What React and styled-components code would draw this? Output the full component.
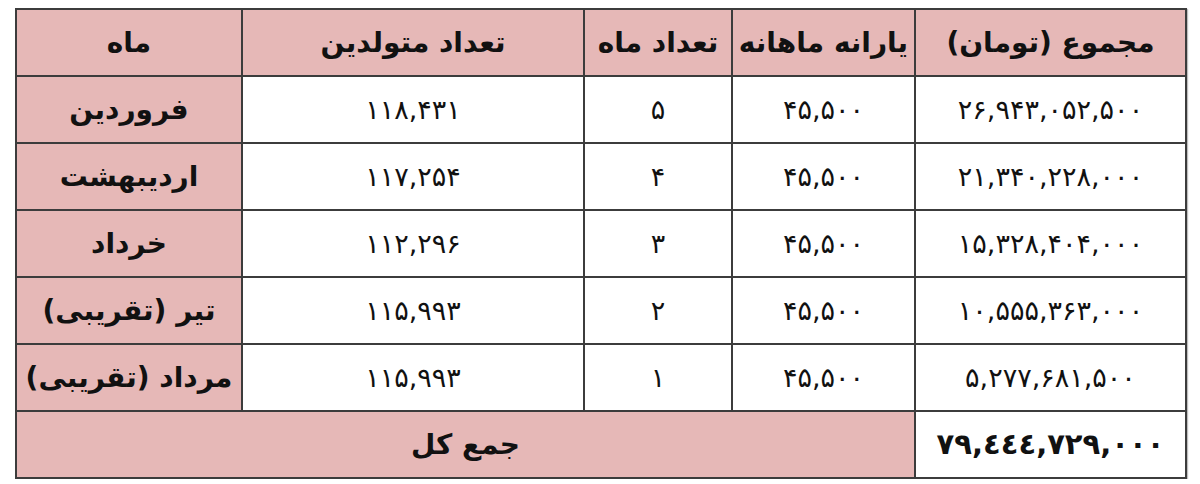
import styled, { createGlobalStyle } from "styled-components"

const GlobalStyle = createGlobalStyle`
    body {
        margin: 0;
        background: #ffffff;
        font-family: "DejaVu Sans", "Noto Sans", sans-serif;
    }
`

const Page = styled.div`
    padding: 8px 0 0 15px;
`

const Table = styled.table`
    border-collapse: collapse;
    direction: ltr;
    width: 1170px;
    table-layout: fixed;
    border: 2px solid #3c3c3c;
    box-shadow: 1px 1px 1px rgba(0, 0, 0, 0.25);
`

const Cell = styled.td`
    height: 65px;
    padding: 0 4px;
    border: 2px solid #3c3c3c;
    background: ${props => (props.$pink ? "#e6b8b7" : "#ffffff")};
    color: #111;
    text-align: center;
    vertical-align: middle;
    font-size: ${props => (props.$big ? "29px" : props.$num ? "27px" : "28px")};
    font-weight: ${props => (props.$bold ? 700 : 400)};
    line-height: 1;
    direction: ${props => (props.$num ? "ltr" : "rtl")};
    unicode-bidi: ${props => (props.$num ? "bidi-override" : "normal")};
    white-space: nowrap;
    overflow: hidden;
`

const columns = [226, 342, 148, 183, 271]

const headers = ["ماه", "تعداد متولدین", "تعداد ماه", "یارانه ماهانه", "مجموع (تومان)"]

const rows = [
    ["فروردین", "۱۱۸,۴۳۱", "۵", "۴۵,۵۰۰", "۲۶,۹۴۳,۰۵۲,۵۰۰"],
    ["اردیبهشت", "۱۱۷,۲۵۴", "۴", "۴۵,۵۰۰", "۲۱,۳۴۰,۲۲۸,۰۰۰"],
    ["خرداد", "۱۱۲,۲۹۶", "۳", "۴۵,۵۰۰", "۱۵,۳۲۸,۴۰۴,۰۰۰"],
    ["تیر (تقریبی)", "۱۱۵,۹۹۳", "۲", "۴۵,۵۰۰", "۱۰,۵۵۵,۳۶۳,۰۰۰"],
    ["مرداد (تقریبی)", "۱۱۵,۹۹۳", "۱", "۴۵,۵۰۰", "۵,۲۷۷,۶۸۱,۵۰۰"],
]

const App = () => {
    return (
        <Page>
            <GlobalStyle />
            <Table>
                <colgroup>
                    {columns.map((w, i) => <col key={i} style={{ width: w }} />)}
                </colgroup>
                <thead>
                    <tr>
                        {headers.map(h => (
                            <Cell as="th" key={h} $pink $bold>{h}</Cell>
                        ))}
                    </tr>
                </thead>
                <tbody>
                    {rows.map(row => (
                        <tr key={row[0]}>
                            <Cell $pink $bold>{row[0]}</Cell>
                            {row.slice(1).map((v, i) => (
                                <Cell key={i} $num>{v}</Cell>
                            ))}
                        </tr>
                    ))}
                    <tr>
                        <Cell colSpan={4} $pink $bold>جمع کل</Cell>
                        <Cell $num $bold $big>۷۹,٤٤٤,۷۲۹,۰۰۰</Cell>
                    </tr>
                </tbody>
            </Table>
        </Page>
    )
}

export default App
